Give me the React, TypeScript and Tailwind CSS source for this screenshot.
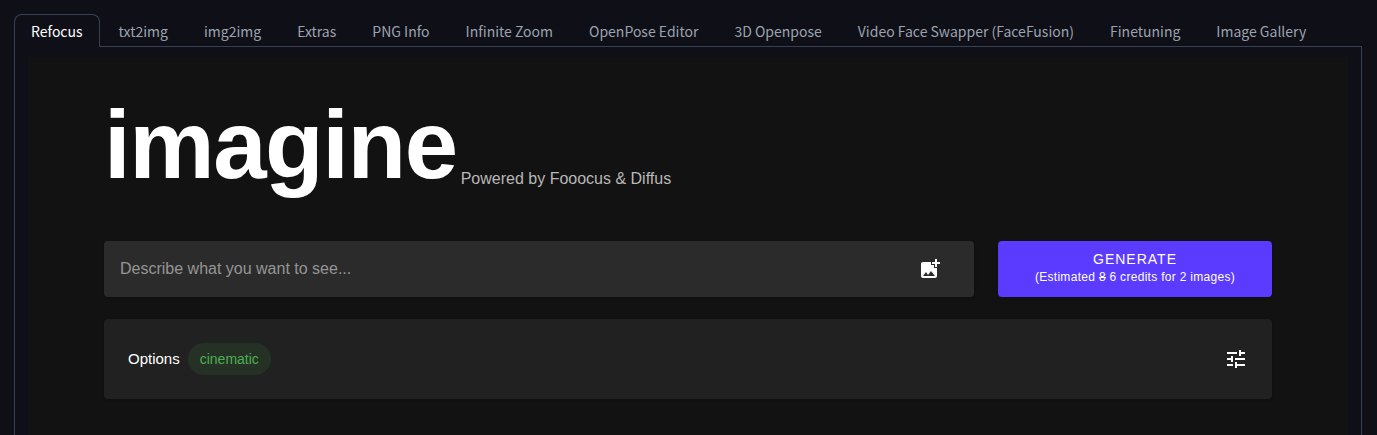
import { MdAddPhotoAlternate, MdTune } from "react-icons/md"

const tabs = [
  "Refocus",
  "txt2img",
  "img2img",
  "Extras",
  "PNG Info",
  "Infinite Zoom",
  "OpenPose Editor",
  "3D Openpose",
  "Video Face Swapper (FaceFusion)",
  "Finetuning",
  "Image Gallery",
]

const TabBar = () => {
  return (
    <nav className="flex gap-0.5 border-b border-[#374151] font-['Noto_Sans_CJK_JP',sans-serif] text-sm">
      {tabs.map((tab, i) => (
        <button
          key={tab}
          className={
            i === 0
              ? "-mb-px h-[33px] whitespace-nowrap rounded-t-lg border border-b-0 border-[#374151] bg-[#0f0f18] px-4 text-white"
              : "-mb-px h-[33px] whitespace-nowrap border border-b-0 border-transparent px-4 text-[#9ca3af]"
          }
        >
          {tab}
        </button>
      ))}
    </nav>
  )
}

const App = () => {
  return (
    <div className="min-h-screen bg-[#0f0f18] pl-[14px] pr-[15px] pt-[14px] flex flex-col">
      <TabBar />
      <div className="flex flex-1 flex-col border-x border-[#374151] px-[13px] pt-[10px]">
        <main className="flex-1 bg-[#121212] font-['Liberation_Sans',sans-serif] text-white">
          <div className="mx-auto max-w-[1200px] px-4 pt-8 pb-9">
            <header className="flex items-end gap-1">
              <h1 className="text-8xl font-bold leading-[112px] tracking-[-0.015em]">
                imagine
              </h1>
              <p className="pb-[10px] text-base text-[#b8b8b8]">
                Powered by Fooocus & Diffus
              </p>
            </header>

            <form className="mt-10 grid grid-cols-4 gap-6">
              <div className="col-span-3 flex h-14 items-center rounded bg-[#2b2b2b] pl-4 pr-8 shadow-sm">
                <input
                  type="text"
                  aria-label="Prompt"
                  placeholder="Describe what you want to see..."
                  className="min-w-0 flex-1 bg-transparent text-base outline-none placeholder:text-[#959595]"
                />
                <button type="button" aria-label="Add image">
                  <MdAddPhotoAlternate size={24} />
                </button>
              </div>
              <button
                type="button"
                className="flex h-14 flex-col items-center justify-center rounded bg-[#5b3bff] pb-0.5 shadow-sm"
              >
                <span className="text-sm leading-[18px] tracking-[1px]">
                  GENERATE
                </span>
                <span className="text-xs leading-[18px] tracking-wide">
                  (Estimated <s>8</s> 6 credits for 2 images)
                </span>
              </button>
            </form>

            <section className="mt-[22px] flex h-20 items-center justify-between rounded bg-[#212121] px-6 shadow-sm">
              <div className="flex items-center gap-2">
                <h2 className="text-[15px]">Options</h2>
                <span className="flex h-8 items-center rounded-full bg-[#263126] px-3 text-sm text-[#4caf50]">
                  cinematic
                </span>
              </div>
              <button type="button" aria-label="Show options">
                <MdTune size={24} />
              </button>
            </section>
          </div>
        </main>
      </div>
    </div>
  )
}

export default App
